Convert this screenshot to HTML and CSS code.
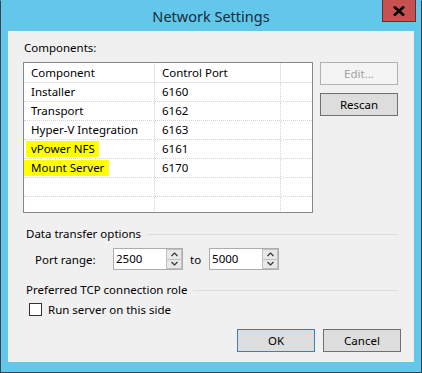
FILE: index.html
```html
<!DOCTYPE html>
<html>
<head>
<meta charset="utf-8">
<link rel="stylesheet" href="styles.css">
</head>
<body>
<div class="window">
  <div class="titlebar">
    <span class="title">Network Settings</span>
    <div class="close"><svg width="12" height="10" viewBox="0 0 12 10"><path d="M1 0.5 L11 9.5 M11 0.5 L1 9.5" stroke="#000" stroke-width="2.6"/></svg></div>
  </div>
  <div class="client">
    <div class="label comp-label">Components:</div>
    <div class="top-row">
      <div class="listbox">
        <div class="lrow head">
          <div class="c1">Component</div><div class="c2">Control Port</div><div class="c3"></div>
        </div>
        <div class="lrow"><div class="c1">Installer</div><div class="c2">6160</div><div class="c3"></div></div>
        <div class="lrow"><div class="c1">Transport</div><div class="c2">6162</div><div class="c3"></div></div>
        <div class="lrow"><div class="c1">Hyper-V Integration</div><div class="c2">6163</div><div class="c3"></div></div>
        <div class="lrow"><div class="c1"><span class="hl hl1">vPower NFS</span></div><div class="c2">6161</div><div class="c3"></div></div>
        <div class="lrow"><div class="c1"><span class="hl hl2">Mount Server</span></div><div class="c2">6170</div><div class="c3"></div></div>
        <div class="lrow"><div class="c1"></div><div class="c2"></div><div class="c3"></div></div>
        <div class="lrow"><div class="c1"></div><div class="c2"></div><div class="c3"></div></div>
        <div class="lrow"><div class="c1"></div><div class="c2"></div><div class="c3"></div></div>
      </div>
      <div class="side-buttons">
        <div class="btn disabled">Edit...</div>
        <div class="btn">Rescan</div>
      </div>
    </div>
    <div class="group-label"><span>Data transfer options</span><div class="gline"></div></div>
    <div class="port-row">
      <span class="port-label">Port range:</span>
      <div class="spin">
        <div class="spin-val">2500</div>
        <div class="spin-btns">
          <div class="sb"><svg width="7" height="5" viewBox="0 0 7 5"><path d="M0.5 4 L3.5 1 L6.5 4" fill="none" stroke="#333" stroke-width="1.2"/></svg></div>
          <div class="sb"><svg width="7" height="5" viewBox="0 0 7 5"><path d="M0.5 1 L3.5 4 L6.5 1" fill="none" stroke="#333" stroke-width="1.2"/></svg></div>
        </div>
      </div>
      <span class="to">to</span>
      <div class="spin">
        <div class="spin-val">5000</div>
        <div class="spin-btns">
          <div class="sb"><svg width="7" height="5" viewBox="0 0 7 5"><path d="M0.5 4 L3.5 1 L6.5 4" fill="none" stroke="#333" stroke-width="1.2"/></svg></div>
          <div class="sb"><svg width="7" height="5" viewBox="0 0 7 5"><path d="M0.5 1 L3.5 4 L6.5 1" fill="none" stroke="#333" stroke-width="1.2"/></svg></div>
        </div>
      </div>
    </div>
    <div class="group-label tcp"><span>Preferred TCP connection role</span><div class="gline"></div></div>
    <div class="check-row">
      <div class="checkbox"></div>
      <span>Run server on this side</span>
    </div>
    <div class="bottom-buttons">
      <div class="btn default">OK</div>
      <div class="btn">Cancel</div>
    </div>
  </div>
</div>
</body>
</html>
```
FILE: styles.css
```css
* { box-sizing: border-box; }
html, body { margin: 0; padding: 0; }
body {
  font-family: "Noto Sans", "Open Sans", "DejaVu Sans", sans-serif;
  font-size: 11.5px;
  color: #000;
  background: #62c7ea;
}
.window {
  width: 422px;
  height: 373px;
  border: 1px solid #34454d;
  border-top-color: #62c7ea;
  background: #62c7ea;
  display: flex;
  flex-direction: column;
  padding: 0 7px 10px 7px;
}
.titlebar {
  height: 30px;
  flex: none;
  position: relative;
  display: flex;
  align-items: center;
  justify-content: center;
}
.title {
  font-size: 14.5px;
  color: #1b2b37;
  margin-top: -1px;
}
.close {
  position: absolute;
  right: -2px;
  top: -1px;
  width: 34px;
  height: 22px;
  background: #c75050;
  border: 1px solid #5e3030;
  border-top: none;
  display: flex;
  align-items: center;
  justify-content: center;
}
.client {
  flex: 1;
  background: #f0f0f0;
  padding: 0 16px 0 15px;
  display: flex;
  flex-direction: column;
}
.label { line-height: 16px; }
.comp-label { margin-top: 9px; margin-left: 1px; height: 16px; margin-bottom: 6px; }
.top-row { display: flex; gap: 7px; }
.listbox {
  width: 290px;
  height: 151px;
  border: 1px solid #828790;
  background: #fff;
  overflow: hidden;
}
.lrow {
  display: flex;
  height: 19px;
  border-bottom: 1px dotted #d5d5d5;
}
.lrow > div {
  height: 18px;
  line-height: 18px;
  padding-left: 7px;
  border-right: 1px dotted #d5d5d5;
  white-space: nowrap;
}
.lrow.head { height: 20px; border-bottom: 1px solid #e5e5e5; }
.lrow.head > div { height: 19px; line-height: 19px; border-right: 1px solid #e5e5e5; }
.c1 { width: 131px; }
.c2 { width: 126px; }
.c3 { flex: 1; border-right: none !important; }
.hl { background: #ffff00; display: inline-block; line-height: 16px; }
.hl1 { margin-left: -5px; padding: 0 4px 0 5px; }
.hl2 { margin-left: -7px; padding: 0 5px 0 7px; }
.side-buttons { display: flex; flex-direction: column; gap: 8px; width: 78px; }
.btn {
  width: 78px;
  height: 23px;
  border: 1px solid #707070;
  background: #dddddd;
  display: flex;
  align-items: center;
  justify-content: center;
}
.btn.disabled { border-color: #adb2b5; background: #f4f4f4; color: #a0a0a0; }
.btn.default { border-color: #3c7fb1; }
.group-label {
  display: flex;
  align-items: center;
  gap: 6px;
  margin-top: 13px;
  margin-left: 3px;
  height: 16px;
  line-height: 16px;
}
.gline { flex: 1; height: 1px; background: #dcdcdc; }
.port-row {
  display: flex;
  align-items: center;
  margin-top: 6px;
  height: 22px;
}
.port-label { margin-left: 12px; width: 78px; }
.to { margin: 0 8px 0 7px; }
.spin {
  width: 70px;
  height: 22px;
  border: 1px solid #abadb3;
  background: #fff;
  display: flex;
}
.spin-val { flex: 1; padding-left: 2px; line-height: 19px; }
.spin-btns { width: 16px; display: flex; flex-direction: column; }
.sb {
  flex: 1;
  background: #e8e8e8;
  border: 1px solid #c0c0c0;
  display: flex;
  align-items: center;
  justify-content: center;
}
.sb + .sb { border-top: none; }
.tcp { margin-top: 12px; }
.check-row {
  display: flex;
  align-items: center;
  margin-top: 3px;
  margin-left: 6px;
  height: 16px;
  gap: 6px;
}
.checkbox { width: 13px; height: 13px; border: 1px solid #333; background: #fff; }
.bottom-buttons {
  display: flex;
  justify-content: flex-end;
  gap: 8px;
  margin-top: 12px;
  margin-right: -3px;
}
```
